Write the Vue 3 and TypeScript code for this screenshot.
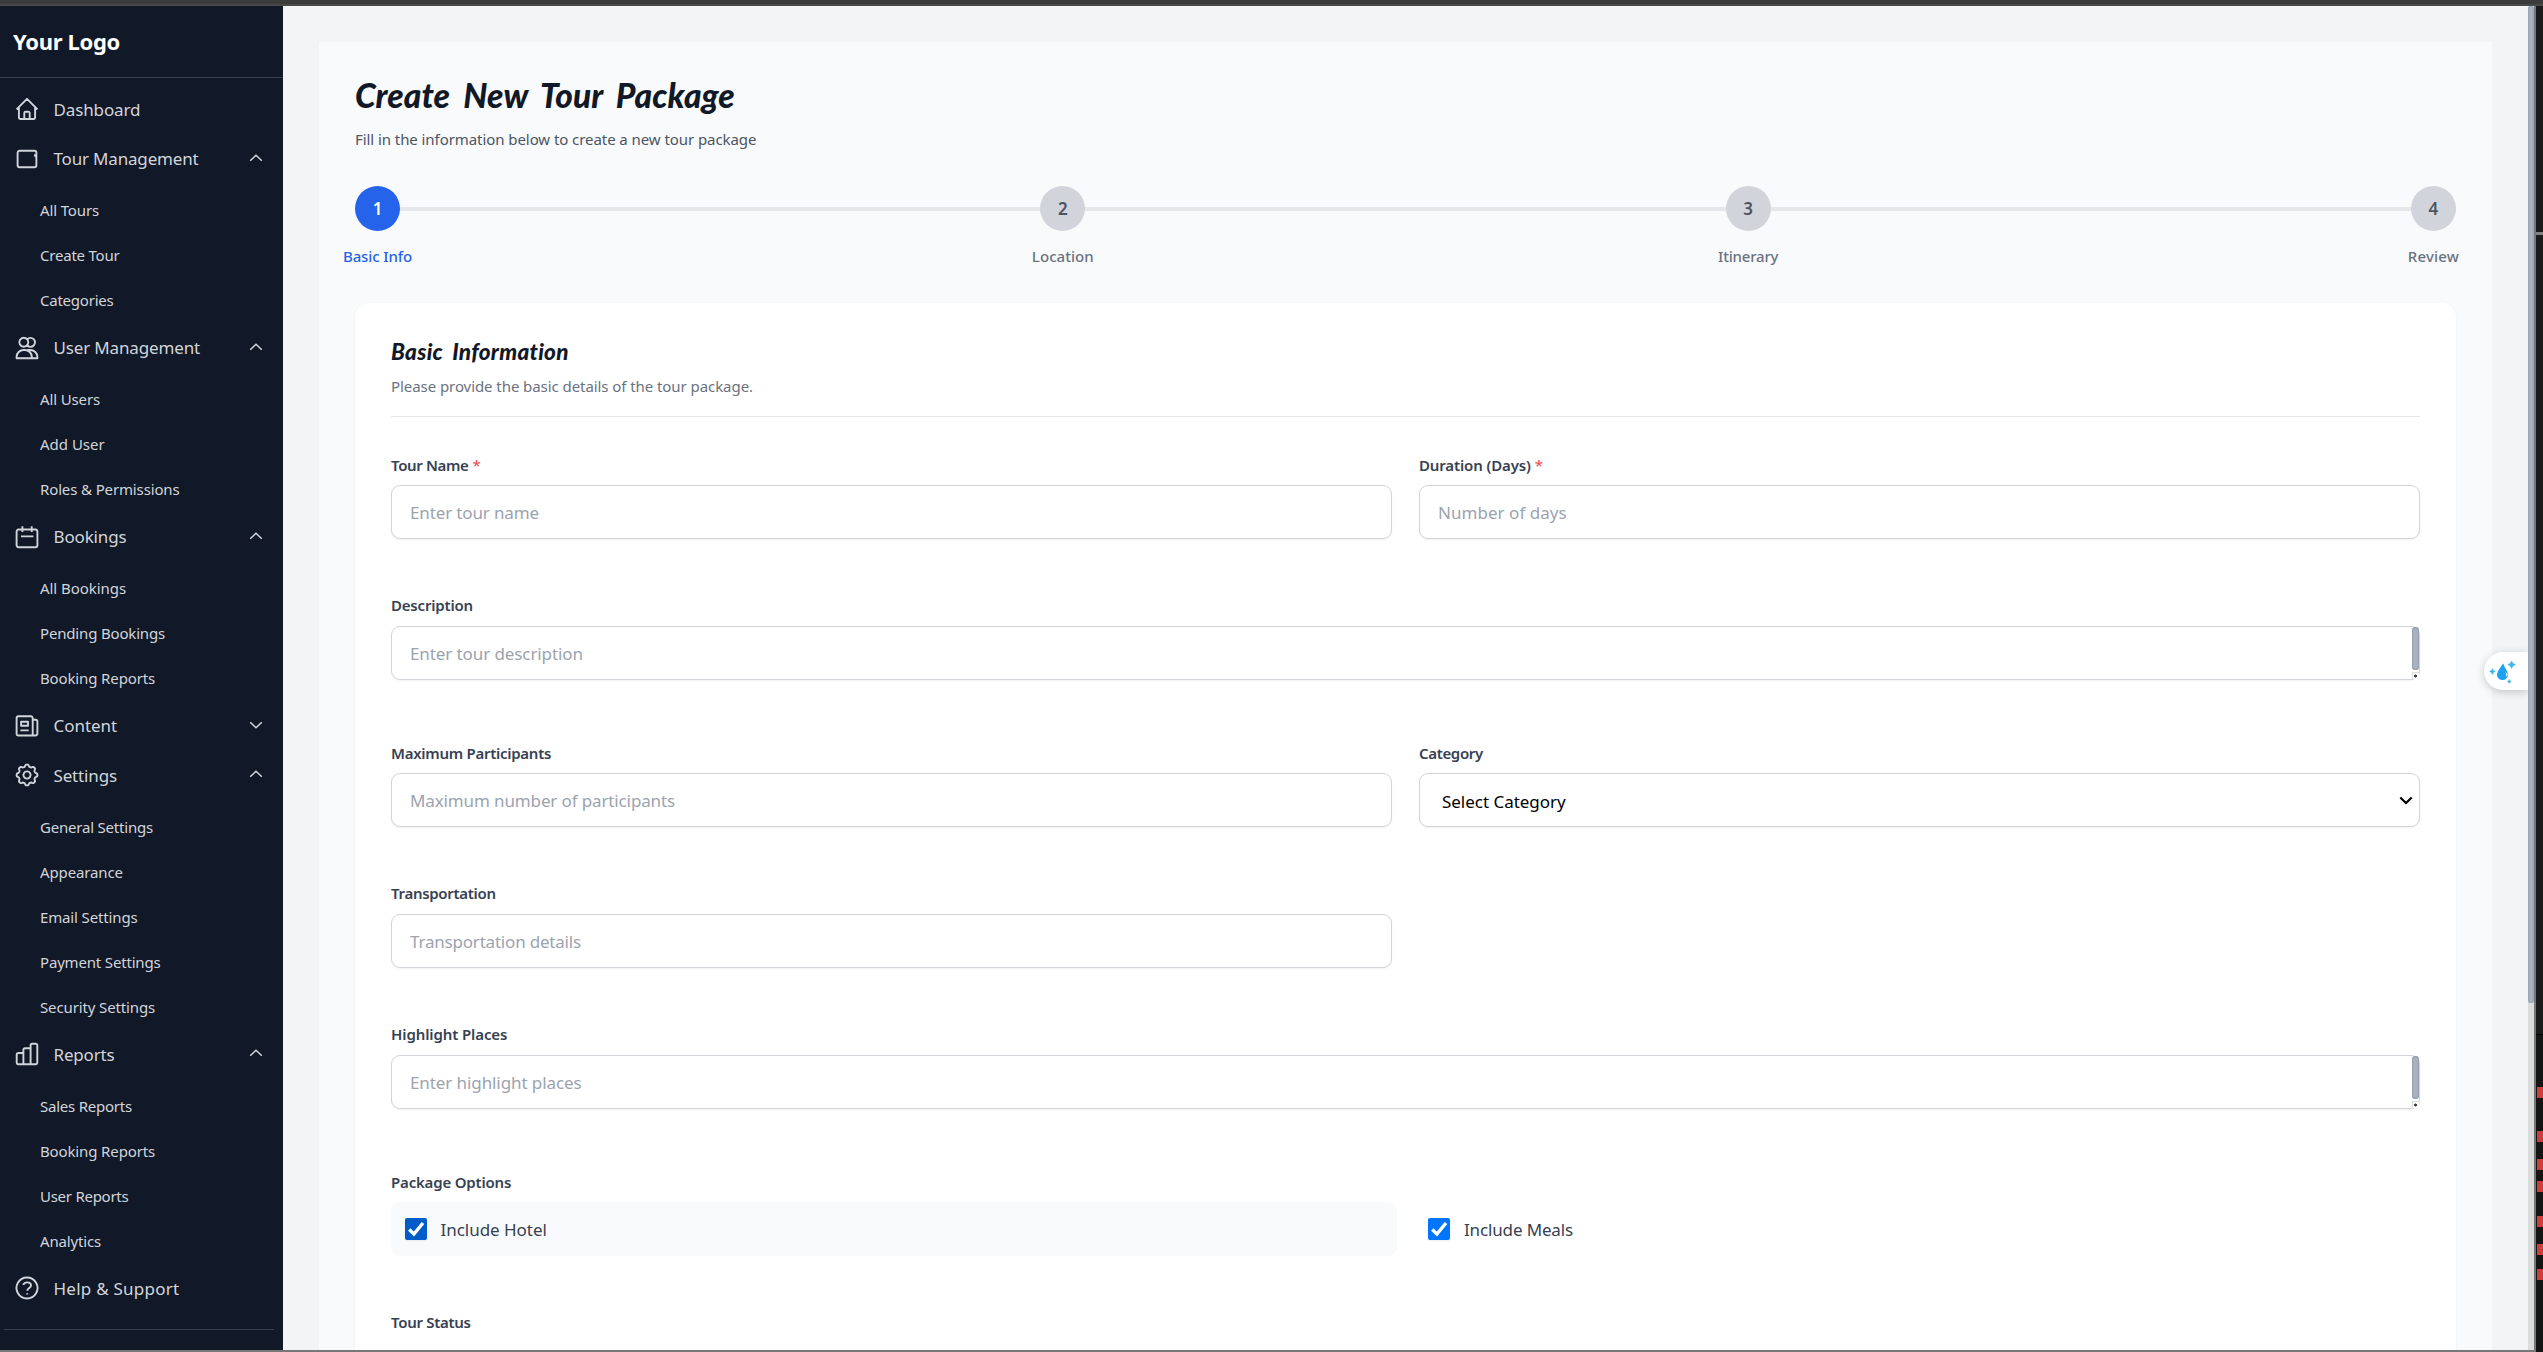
<script setup lang="ts">
import type { Directive } from 'vue'

interface Item {
  label: string
  width: number
  icon?: string
  open?: boolean
  children?: [string, number][]
}

/* Scalloped outline of the settings cog. */
function cog(): string {
  const points: string[] = []
  for (let i = 0; i < 96; i++) {
    const a = (i / 96) * Math.PI * 2
    const r = 9.4 + 1.05 * Math.tanh(1.8 * Math.cos(8 * a))
    points.push(`${(12 + r * Math.sin(a)).toFixed(2)} ${(12 - r * Math.cos(a)).toFixed(2)}`)
  }
  return 'M' + points.join('L') + 'Z'
}

const icons: Record<string, string> = {
  home: 'M1.5 12.3 12 1.8 22.5 12.3M3.9 10.2V20.6a1.4 1.4 0 0 0 1.4 1.4H18.7a1.4 1.4 0 0 0 1.4-1.4V10.2M9.3 22V16a1.3 1.3 0 0 1 1.3-1.3h2.8a1.3 1.3 0 0 1 1.3 1.3V22',
  tour: 'M4.6 3.8H19.4a2 2 0 0 1 2 2V18.3a2 2 0 0 1-2 2H4.6a2 2 0 0 1-2-2V5.8a2 2 0 0 1 2-2ZM21.2 8.2H19M21.2 9.4H19.6',
  users: 'M8.8 1.7a4.5 4.5 0 1 0 .01 0ZM12.3 3.2a4.5 4.5 0 1 1 0 6.3M1.6 22.2v-1.4a7 6.8 0 0 1 7-6.8h1.2a7 6.8 0 0 1 7 6.8v1.4ZM12.5 14h2.6a7.2 6.8 0 0 1 7.3 6.8v1.4h-5.6',
  calendar: 'M3.6 4.5H20.4a2 2 0 0 1 2 2V20.2a2 2 0 0 1-2 2H3.6a2 2 0 0 1-2-2V6.5a2 2 0 0 1 2-2ZM7.4 1.2V7M16.7 1.2V7M6 11.4H18.4',
  news: 'M3.4 2.3H15.9a1.8 1.8 0 0 1 1.8 1.8V21.5H3.4a1.8 1.8 0 0 1-1.8-1.8V4.1A1.8 1.8 0 0 1 3.4 2.3ZM17.7 5.8h3a1.7 1.7 0 0 1 1.7 1.7V19.3a2.2 2.2 0 0 1-2.2 2.2H17.2M6.1 7.8h6.9v3.9H6.1ZM5.4 16.4h8.3',
  cog: cog() + 'M12 8.4a3.6 3.6 0 1 0 .01 0Z',
  chart: 'M8.4 22.2H3.3a1.6 1.6 0 0 1-1.6-1.6V12.6A1.6 1.6 0 0 1 3.3 11H8.4M8.4 22.2V7.8A1.6 1.6 0 0 1 10 6.2h5.4M8.4 22.2h7.2V3.3a1.6 1.6 0 0 1 1.6-1.6h3.5a1.6 1.6 0 0 1 1.6 1.6V20.6a1.6 1.6 0 0 1-1.6 1.6H15.6',
  help: 'M12 1.5a10.5 10.5 0 1 0 .01 0ZM8.2 8.8c.7-1.5 2.1-2.4 3.9-2.4 2.3 0 3.9 1.3 3.9 3.1 0 2.5-3.7 2.6-3.7 5.2M12.2 17.2v1.2',
}

const menu: Item[] = [
  { label: 'Dashboard', width: 85.5, icon: 'home' },
  { label: 'Tour Management', width: 145, icon: 'tour', open: true, children: [['All Tours', 59], ['Create Tour', 79.5], ['Categories', 73.5]] },
  { label: 'User Management', width: 145.5, icon: 'users', open: true, children: [['All Users', 60], ['Add User', 64.5], ['Roles & Permissions', 138.5]] },
  { label: 'Bookings', width: 72, icon: 'calendar', open: true, children: [['All Bookings', 86], ['Pending Bookings', 124], ['Booking Reports', 114]] },
  { label: 'Content', width: 62.5, icon: 'news', open: false },
  { label: 'Settings', width: 63.5, icon: 'cog', open: true, children: [['General Settings', 113], ['Appearance', 82.5], ['Email Settings', 96.5], ['Payment Settings', 119.5], ['Security Settings', 115]] },
  { label: 'Reports', width: 60, icon: 'chart', open: true, children: [['Sales Reports', 92], ['Booking Reports', 114], ['User Reports', 87.5], ['Analytics', 61]] },
  { label: 'Help & Support', width: 124.5, icon: 'help' },
]

const steps: [string, number][] = [['Basic Info', 68], ['Location', 60.5], ['Itinerary', 60.5], ['Review', 50]]
const marks = [1087, 1131, 1159, 1181, 1216, 1244, 1269]

/* Tracks a line of text so that its ink spans the given number of pixels. */
const vSpan: Directive<HTMLElement, number> = {
  mounted(el, { value }) {
    const text = (el as HTMLInputElement).placeholder || el.textContent!.trim()
    const css = getComputedStyle(el)
    const ctx = document.createElement('canvas').getContext('2d')!
    ctx.font = `${css.fontStyle} ${css.fontWeight} ${css.fontSize} ${css.fontFamily}`
    const m = ctx.measureText(text)
    const gaps = (text.split(' ').length - 1) * (parseFloat(css.wordSpacing) || 0)
    const ink = m.actualBoundingBoxRight + m.actualBoundingBoxLeft + gaps
    el.style.letterSpacing = `${((value - ink) / (text.length - 1)).toFixed(3)}px`
  },
}
</script>

<template>
  <div class="screen">
    <div class="topbar"></div>
    <div class="body">
      <aside class="sidebar">
        <div class="logo"><span v-span="106.5">Your Logo</span></div>
        <nav class="menu">
          <template v-for="item in menu" :key="item.label">
            <div class="item">
              <svg class="icon" viewBox="0 0 24 24"><path :d="icons[item.icon!]" /></svg>
              <span v-span="item.width" class="item-label">{{ item.label }}</span>
              <svg v-if="item.open !== undefined" class="chev" viewBox="0 0 14 8">
                <path :d="item.open ? 'M1.2 6.8 7 1.2 12.8 6.8' : 'M1.2 1.2 7 6.8 12.8 1.2'" />
              </svg>
            </div>
            <div v-if="item.children" class="subs">
              <div v-for="[name, w] in item.children" :key="name" class="sub"><span v-span="w">{{ name }}</span></div>
            </div>
          </template>
        </nav>
        <div class="side-rule"></div>
      </aside>

      <main class="main">
        <section class="panel">
          <h1><span v-span="380.5">Create New Tour Package</span></h1>
          <p class="lead"><span v-span="400">Fill in the information below to create a new tour package</span></p>
          <div class="stepper">
            <div v-for="([name, w], i) in steps" :key="name" class="step" :class="{ active: i === 0 }">
              <div class="dot">{{ i + 1 }}</div>
              <div class="step-name"><span v-span="w">{{ name }}</span></div>
            </div>
          </div>

          <div class="card">
            <header class="card-head">
              <h2><span v-span="177">Basic Information</span></h2>
              <p><span v-span="360">Please provide the basic details of the tour package.</span></p>
            </header>

            <div class="row">
              <div class="field">
                <label><span v-span="78">Tour Name</span><i>*</i></label>
                <input v-span="127.5" class="box" placeholder="Enter tour name" />
              </div>
              <div class="field">
                <label><span v-span="111">Duration (Days)</span><i>*</i></label>
                <input v-span="127.5" class="box" placeholder="Number of days" />
              </div>
            </div>

            <div class="row wide">
              <div class="field">
                <label class="high"><span v-span="80.5">Description</span></label>
                <div class="area">
                  <input v-span="171.5" class="box" placeholder="Enter tour description" />
                  <b class="thumb"></b><b class="grip"></b>
                </div>
              </div>
            </div>

            <div class="row">
              <div class="field">
                <label><span v-span="159">Maximum Participants</span></label>
                <input v-span="264" class="box" placeholder="Maximum number of participants" />
              </div>
              <div class="field">
                <label><span v-span="65">Category</span></label>
                <div class="box select">
                  <span v-span="124">Select Category</span>
                  <svg viewBox="0 0 14 9"><path d="M1.3 1.5 7 7 12.7 1.5" /></svg>
                </div>
              </div>
            </div>

            <div class="row half">
              <div class="field">
                <label class="high"><span v-span="104.5">Transportation</span></label>
                <input v-span="171" class="box" placeholder="Transportation details" />
              </div>
            </div>

            <div class="row wide">
              <div class="field">
                <label class="high"><span v-span="115">Highlight Places</span></label>
                <div class="area">
                  <input v-span="170.5" class="box" placeholder="Enter highlight places" />
                  <b class="thumb"></b><b class="grip"></b>
                </div>
              </div>
            </div>

            <div class="options">
              <label><span v-span="119">Package Options</span></label>
              <div class="option-row">
                <div class="option hovered">
                  <span class="check"><svg viewBox="0 0 22 22"><path d="M4.2 11.6 8.9 16 18 5" /></svg></span>
                  <span v-span="105">Include Hotel</span>
                </div>
                <div class="option">
                  <span class="check"><svg viewBox="0 0 22 22"><path d="M4.2 11.6 8.9 16 18 5" /></svg></span>
                  <span v-span="109">Include Meals</span>
                </div>
              </div>
            </div>

            <label class="high"><span v-span="79.5">Tour Status</span></label>
          </div>
        </section>

        <div class="assistant">
          <svg viewBox="0 0 44 38">
            <path d="M19.4 11.5C19.4 11.5 13 18.8 13 22.8a5.5 5.3 0 0 0 11 0C24 19.4 20.6 16 19.4 11.5Z" fill="#1da1f2" />
            <path d="M21.6 20.6a2 2 0 0 1 0 4q.9-2 0-4" fill="#d7effd" />
            <path d="M27.6 9q.7 3 3.8 3.7-3.100.7-3.800 3.800-.7-3.100-3.800-3.800 3.100-.7 3.800-3.700ZM8.400 16.600q.5 2.400 2.900 2.900-2.400.5-2.900 2.900-.5-2.400-2.900-2.900 2.400-.5 2.900-2.900ZM25.300 27.500q.3 1.700 2 2-1.700.3-2 2-.3-1.700-2-2 1.700-.3 2-2Z" fill="#3fb4ee" stroke="#3fb4ee" stroke-width=".5" />
          </svg>
        </div>
      </main>

      <div class="scroll"><div class="scroll-thumb"></div></div>
      <div class="frame-edge"></div>
      <div class="editor">
        <span class="seam"></span>
        <span v-for="y in marks" :key="y" class="mark" :style="{ top: y - 6 + 'px' }"></span>
      </div>
    </div>
  </div>
</template>

<style>
html,
body {
  margin: 0;
  overflow: hidden;
}
</style>

<style scoped>
* {
  box-sizing: border-box;
}
.screen {
  width: 2543px;
  height: 1352px;
  display: flex;
  flex-direction: column;
  overflow: hidden;
  background: #777;
  font-family: 'Noto Sans', 'Open Sans', sans-serif;
  font-size: 17px;
}
span {
  white-space: nowrap;
}
.topbar {
  height: 6px;
  flex: none;
  background: #3b3b3b;
  border-bottom: 2px solid #484848;
}
.body {
  display: flex;
  height: 1346px;
}
.sidebar {
  width: 283px;
  height: 1344px;
  flex: none;
  overflow: hidden;
  background: #111827;
  color: #d1d5db;
}
.logo {
  height: 72px;
  padding-left: 13px;
  border-bottom: 1px solid #374151;
  color: #fff;
  font-size: 22px;
  font-weight: 700;
  line-height: 71px;
}
.menu {
  padding-top: 6.7px;
}
.item {
  height: 49.5px;
  display: flex;
  align-items: center;
  padding: 0 20px 0 14.6px;
}
.icon {
  width: 24px;
  height: 24px;
  margin-right: 14.9px;
  fill: none;
  stroke: #d1d5db;
  stroke-width: 1.9;
  stroke-linejoin: round;
}
.item-label {
  flex: 1;
}
.chev {
  width: 14px;
  height: 8px;
  margin-top: -2px;
  fill: none;
  stroke: #d1d5db;
  stroke-width: 1.5;
}
.subs {
  padding-top: 4.5px;
}
.sub {
  height: 45px;
  padding-left: 40px;
  font-size: 15px;
  line-height: 45px;
}
.side-rule {
  height: 1px;
  margin: 15.5px 9px 0 4px;
  background: #374151;
}
.main {
  position: relative;
  width: 2245px;
  height: 1344px;
  flex: none;
  padding: 36px 36px 0;
  overflow: hidden;
  background: #f3f4f6;
}
.panel {
  height: 1400px;
  padding: 36px 36px 0;
  background: #f9fafb;
}
h1,
h2 {
  margin: 0;
  color: #111827;
  font-family: Lato, sans-serif;
  font-style: italic;
  font-weight: 900;
}
h1 {
  font-size: 33.5px;
  line-height: 34px;
  word-spacing: 6px;
}
p {
  margin: 0;
  font-size: 15px;
  line-height: 24px;
}
.lead {
  margin-top: 15px;
  color: #4b5563;
}
.stepper {
  display: flex;
  justify-content: space-between;
  margin-top: 35px;
  background: linear-gradient(#e5e7eb, #e5e7eb) 0 21px / 100% 4px no-repeat;
}
.step {
  width: 45px;
  display: flex;
  flex-direction: column;
  align-items: center;
  color: #6b7280;
}
.dot {
  width: 45px;
  height: 45px;
  border-radius: 50%;
  background: #d1d5db;
  color: #4b5563;
  font-weight: 600;
  line-height: 45px;
  text-align: center;
}
.step-name {
  margin-top: 13px;
  font-size: 15px;
  font-weight: 500;
  line-height: 24px;
}
.active {
  color: #2563eb;
}
.active .dot {
  background: #2563eb;
  color: #fff;
}
.card {
  height: 1100px;
  margin-top: 35px;
  padding: 36px;
  border-radius: 13.5px;
  background: #fff;
  box-shadow: 0 1px 3px rgba(0, 0, 0, 0.06);
}
.card-head {
  height: 78px;
  margin-bottom: 35px;
  border-bottom: 1px solid #e5e7eb;
}
h2 {
  font-size: 22.5px;
  line-height: 26px;
  word-spacing: 4px;
}
.card-head p {
  margin-top: 9px;
  color: #6b7280;
}
.row {
  display: grid;
  grid-template-columns: 1fr 1fr;
  gap: 27px;
  margin-bottom: 54px;
}
.wide {
  grid-template-columns: 1fr;
  margin-bottom: 60px;
}
label {
  display: block;
  height: 33px;
  padding-top: 1px;
  color: #374151;
  font-size: 15px;
  font-weight: 600;
  line-height: 24px;
}
.high {
  padding-top: 0;
}
i {
  margin-left: 4px;
  color: #ef4444;
  font-style: normal;
  font-weight: 400;
}
.box {
  display: block;
  width: 100%;
  height: 54px;
  margin: 0;
  padding: 0 18px;
  border: 1px solid #d1d5db;
  border-radius: 9px;
  background: #fff;
  box-shadow: 0 1px 2px rgba(0, 0, 0, 0.05);
  font-family: inherit;
  font-size: 17px;
}
.box::placeholder {
  color: #9ca3af;
}
.select {
  display: flex;
  align-items: center;
  justify-content: space-between;
  padding: 2px 6.5px 0 22px;
  color: #000;
  font-weight: 400;
}
.select svg {
  width: 14px;
  height: 9px;
  margin-top: -1px;
  fill: none;
  stroke: #000;
  stroke-width: 2.2;
}
.area {
  position: relative;
}
.thumb {
  position: absolute;
  top: 1px;
  right: 1px;
  width: 7px;
  height: 43px;
  border-radius: 4px;
  background: #a9b3bf;
  box-shadow: inset 0 0 2px #6b7480;
}
.grip {
  position: absolute;
  right: 1px;
  bottom: 1px;
  width: 7px;
  height: 7px;
  background: radial-gradient(circle at 2.5px 3px, #444 1.3px, #fff 1.8px);
  border-top: 1px solid #d9dce1;
  border-left: 1px solid #d9dce1;
}
.options {
  margin-bottom: 54px;
}
.option-row {
  display: grid;
  grid-template-columns: 1fr 1fr;
  gap: 18px;
}
.option {
  height: 54px;
  display: flex;
  align-items: center;
  gap: 14px;
  padding-left: 13.5px;
  border-radius: 9px;
  color: #374151;
}
.check {
  width: 22px;
  height: 22px;
  border-radius: 2px;
  background: #0075ff;
  box-shadow: 0 1px 2px rgba(0, 0, 0, 0.08);
}
.check svg {
  display: block;
  fill: none;
  stroke: #fff;
  stroke-width: 3.4;
}
.hovered {
  background: #f9fafb;
}
.hovered .check {
  background: #005cc8;
}
.assistant {
  position: absolute;
  top: 646px;
  right: 0;
  width: 44px;
  height: 38px;
  border-radius: 19px 0 0 19px;
  background: #fff;
  box-shadow: 0 2px 9px rgba(0, 0, 0, 0.2);
}
.assistant svg {
  display: block;
}
.scroll {
  width: 6px;
  height: 1344px;
  background: #dbdddd;
}
.scroll-thumb {
  height: 997px;
  border-radius: 3px;
  background: #a7b3be;
  box-shadow: inset 0 0 2px #7f8a95;
}
.frame-edge {
  width: 2px;
  background: #777;
}
.editor {
  position: relative;
  width: 7px;
  height: 1346px;
  background: linear-gradient(#1b1b1b 1028px, #000 1028px 1029px, #141414 1029px);
}
.seam {
  position: absolute;
  top: 226px;
  left: 0;
  width: 7px;
  height: 3px;
  background: #808080;
}
.mark {
  position: absolute;
  left: 1px;
  width: 6px;
  height: 11px;
  background: #cd3e3e;
}
</style>
